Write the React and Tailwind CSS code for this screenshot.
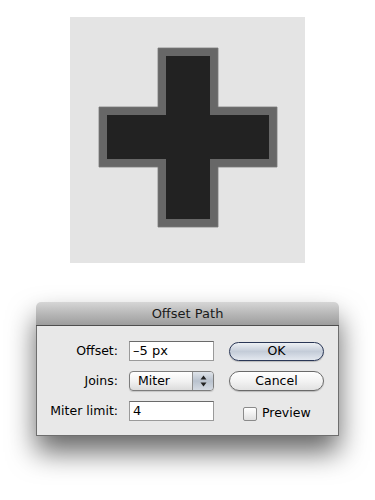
import React from "react";

const font = { fontFamily: '"DejaVu Sans", "Lucida Grande", Verdana, sans-serif' };

export default function App() {
  return (
    <div className="w-[375px] h-[500px] bg-white flex flex-col items-center pt-[17px]" style={font}>
      <div className="w-[235px] h-[246px] bg-[#e4e4e4]">
        <svg width="235" height="246" viewBox="0 0 235 246">
          <path d="M88 31 H148 V90 H207 V150 H148 V210 H88 V150 H29 V90 H88 Z" fill="#676767" stroke="#7a7a7a" strokeWidth="0.8" />
          <path d="M96 39 H140 V98 H199 V142 H140 V202 H96 V142 H37 V98 H96 Z" fill="#222222" />
        </svg>
      </div>

      <div className="mt-[39px] w-[303px] rounded-t-[5px] shadow-[0_16px_28px_rgba(0,0,0,0.6)]">
        <div className="h-[24px] rounded-t-[5px] border-b border-[#4e4e4e] bg-gradient-to-b from-[#d6d6d6] via-[#b8b8b8] to-[#9d9d9d] flex items-center justify-center text-[13px] text-[#1a1a1a]">
          Offset Path
        </div>
        <div className="h-[110px] bg-[#e8e8e8] border border-t-0 border-[#6e6e6e] pt-[15px] flex flex-col gap-[10px] text-[12.5px] text-black">
          <div className="flex items-center h-[20px]">
            <div className="w-[81px] text-right">Offset:</div>
            <div className="ml-[11px] w-[85px] h-[20px] bg-white border border-[#9a9a9a] border-t-[#6a6a6a] flex items-center pl-[3px] text-[13px]">
              –5 px
            </div>
            <button className="ml-[15px] w-[95px] h-[19px] rounded-full border border-[#2a3756] bg-gradient-to-b from-[#eef1f5] via-[#c4ccd8] to-[#e3e8ef] flex items-center justify-center text-[12.5px] shadow-[0_1px_1px_rgba(0,0,0,0.2)]">
              OK
            </button>
          </div>
          <div className="flex items-center h-[20px]">
            <div className="w-[81px] text-right">Joins:</div>
            <div className="ml-[11px] w-[85px] h-[20px] rounded-[4px] border border-[#7d7d7d] bg-gradient-to-b from-white via-[#f2f2f2] to-[#dcdcdc] flex items-center overflow-hidden shadow-[0_1px_1px_rgba(0,0,0,0.15)]">
              <div className="flex-1 pl-[8px]">Miter</div>
              <div className="w-[21px] h-full border-l border-[#8e8e8e] bg-gradient-to-b from-[#dfe4ea] via-[#b9c2ce] to-[#d4dae2] flex flex-col items-center justify-center">
                <svg width="7" height="12" viewBox="0 0 7 12">
                  <path d="M3.5 0.5 L6.5 4.5 H0.5 Z" fill="#222" />
                  <path d="M3.5 11.5 L6.5 7.5 H0.5 Z" fill="#222" />
                </svg>
              </div>
            </div>
            <button className="ml-[15px] w-[95px] h-[20px] rounded-full border border-[#6a6a6a] bg-gradient-to-b from-white via-[#f3f3f3] to-[#e2e2e2] flex items-center justify-center text-[12.5px] shadow-[0_1px_1px_rgba(0,0,0,0.2)]">
              Cancel
            </button>
          </div>
          <div className="flex items-center h-[20px]">
            <div className="w-[81px] text-right">Miter limit:</div>
            <div className="ml-[11px] w-[85px] h-[20px] bg-white border border-[#9a9a9a] border-t-[#6a6a6a] flex items-center pl-[3px] text-[13px]">
              4
            </div>
            <div className="ml-[29px] mt-[5px] flex items-center">
              <div className="w-[14px] h-[14px] rounded-[2px] border border-[#8a8a8a] bg-gradient-to-b from-white to-[#e0e0e0]" />
              <span className="ml-[5px]">Preview</span>
            </div>
          </div>
        </div>
      </div>
    </div>
  );
}
